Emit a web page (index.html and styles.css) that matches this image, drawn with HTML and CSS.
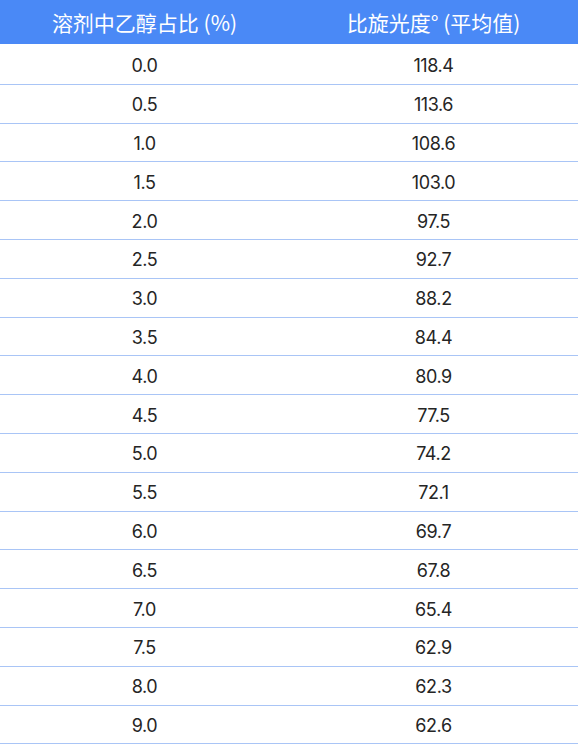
FILE: index.html
```html
<!DOCTYPE html>
<html lang="zh">
<head>
<meta charset="utf-8">
<link rel="stylesheet" href="styles.css">
</head>
<body>
<table class="data">
  <thead>
    <tr><th>溶剂中乙醇占比 (%)</th><th>比旋光度° (平均值)</th></tr>
  </thead>
  <tbody>
    <tr><td>0.0</td><td>118.4</td></tr>
    <tr><td>0.5</td><td>113.6</td></tr>
    <tr><td>1.0</td><td>108.6</td></tr>
    <tr><td>1.5</td><td>103.0</td></tr>
    <tr><td>2.0</td><td>97.5</td></tr>
    <tr><td>2.5</td><td>92.7</td></tr>
    <tr><td>3.0</td><td>88.2</td></tr>
    <tr><td>3.5</td><td>84.4</td></tr>
    <tr><td>4.0</td><td>80.9</td></tr>
    <tr><td>4.5</td><td>77.5</td></tr>
    <tr><td>5.0</td><td>74.2</td></tr>
    <tr><td>5.5</td><td>72.1</td></tr>
    <tr><td>6.0</td><td>69.7</td></tr>
    <tr><td>6.5</td><td>67.8</td></tr>
    <tr><td>7.0</td><td>65.4</td></tr>
    <tr><td>7.5</td><td>62.9</td></tr>
    <tr><td>8.0</td><td>62.3</td></tr>
    <tr><td>9.0</td><td>62.6</td></tr>
  </tbody>
</table>
</body>
</html>
```

FILE: styles.css
```css
html, body {
  margin: 0;
  padding: 0;
  background: #ffffff;
}
.data {
  width: 578px;
  border-collapse: separate;
  border-spacing: 0;
  table-layout: fixed;
  font-family: "Inter", "Noto Sans CJK SC", sans-serif;
}
.data th {
  background: #4a89f6;
  color: #ffffff;
  font-weight: 400;
  font-size: 21px;
  height: 46px;
  padding: 0 0 1px 0;
  text-align: center;
  font-family: "Noto Sans CJK SC", sans-serif;
  border-bottom: 2px solid #ffffff;
  box-sizing: border-box;
}
.data td {
  height: 35.8px;
  padding: 2px 0 0 0;
  text-align: center;
  font-size: 18px;
  letter-spacing: -0.4px;
  color: #252525;
  border-bottom: 1px solid #a9c5f6;
}
```
